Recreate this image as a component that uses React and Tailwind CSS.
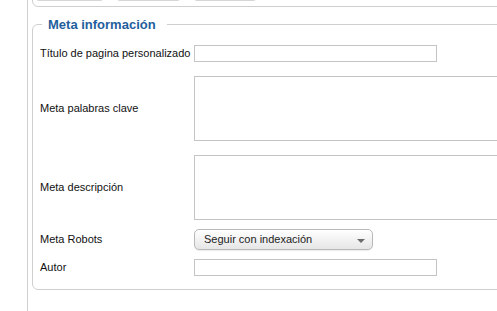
const Label = ({ children }) => (
  <div className="w-[161px] shrink-0 pl-[7px] whitespace-nowrap text-[11px] text-[#111]">{children}</div>
);

const TextInput = () => (
  <div className="w-[243px] h-[17px] shrink-0 border border-[#c4c4c4] bg-white"></div>
);

const TextArea = () => (
  <div className="w-[330px] h-[65px] shrink-0 border border-[#c4c4c4] bg-white"></div>
);

export default function App() {
  return (
    <div
      className="w-[497px] h-[311px] overflow-hidden bg-white flex"
      style={{ fontFamily: '"Liberation Sans", Arial, sans-serif' }}
    >
      <div className="w-[27px] shrink-0"></div>
      <div className="flex-1 border-l border-[#cfcfcf] pl-[4px] min-w-0">
        {/* bottom of the panel above, with its button row */}
        <div className="w-[520px] h-[27px] -mt-[20px] border border-[#cfcfcf] rounded-[6px] flex items-end gap-[14px] pl-[3px] pb-[5px]">
          <div className="w-[67px] h-[6px] border-b border-x border-[#d6d6d6] rounded-b-[3px]"></div>
          <div className="w-[63px] h-[6px] border-b border-x border-[#d6d6d6] rounded-b-[3px]"></div>
          <div className="w-[62px] h-[6px] border-b border-x border-[#d6d6d6] rounded-b-[3px]"></div>
        </div>

        <fieldset className="w-[520px] mt-[10px] border border-[#cfcfcf] rounded-[6px] pb-[13px]">
          <legend className="ml-[9px] pl-[6px] pr-[11px] text-[13px] font-bold leading-[15px] text-[#1f5e9c]">
            Meta información
          </legend>

          <div className="flex items-center mt-[13px]">
            <Label>Título de pagina personalizado</Label>
            <TextInput />
          </div>

          <div className="flex items-center mt-[14px]">
            <Label>Meta palabras clave</Label>
            <TextArea />
          </div>

          <div className="flex items-center mt-[14px]">
            <Label>Meta descripción</Label>
            <TextArea />
          </div>

          <div className="flex items-center mt-[9px]">
            <Label>Meta Robots</Label>
            <div className="relative w-[179px] h-[21px] shrink-0 rounded-[5px] border border-[#b9b9b9] bg-gradient-to-b from-white to-[#e6e6e6] shadow-[0_1px_1px_rgba(0,0,0,0.08)] flex items-center pl-[9px] text-[11px] text-[#222]">
              Seguir con indexación
              <svg className="absolute right-[7px] top-[9px]" width="8" height="4" viewBox="0 0 8 4">
                <path d="M0 0 H8 L4 4 Z" fill="#6b6b6b" />
              </svg>
            </div>
          </div>

          <div className="flex items-center mt-[9px]">
            <Label>Autor</Label>
            <TextInput />
          </div>
        </fieldset>
      </div>
    </div>
  );
}
